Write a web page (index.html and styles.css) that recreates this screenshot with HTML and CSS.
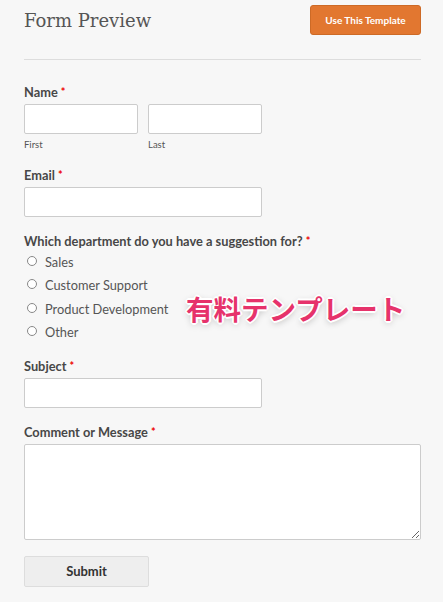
FILE: index.html
```html
<!DOCTYPE html>
<html lang="ja">
<head>
<meta charset="utf-8">
<title>Form Preview</title>
<link rel="stylesheet" href="styles.css">
</head>
<body>
<div class="page">
  <header class="header">
    <h1 class="title">Form Preview</h1>
    <button class="use-btn" type="button">Use This Template</button>
  </header>
  <hr class="divider">
  <form class="form">
    <div class="field">
      <div class="label">Name <span class="req">*</span></div>
      <div class="name-row">
        <div class="name-col">
          <input class="input input-half" type="text">
          <div class="sublabel">First</div>
        </div>
        <div class="name-col">
          <input class="input input-half" type="text">
          <div class="sublabel">Last</div>
        </div>
      </div>
    </div>
    <div class="field">
      <div class="label">Email <span class="req">*</span></div>
      <input class="input input-medium" type="email">
    </div>
    <div class="field field-radios">
      <div class="label">Which department do you have a suggestion for? <span class="req">*</span></div>
      <ul class="radios">
        <li class="radio-row"><input class="radio" type="radio" name="dept"><span>Sales</span></li>
        <li class="radio-row"><input class="radio" type="radio" name="dept"><span>Customer Support</span></li>
        <li class="radio-row"><input class="radio" type="radio" name="dept"><span>Product Development</span></li>
        <li class="radio-row"><input class="radio" type="radio" name="dept"><span>Other</span></li>
      </ul>
    </div>
    <div class="field">
      <div class="label">Subject <span class="req">*</span></div>
      <input class="input input-medium" type="text">
    </div>
    <div class="field">
      <div class="label">Comment or Message <span class="req">*</span></div>
      <textarea class="textarea"></textarea>
    </div>
    <button class="submit" type="button">Submit</button>
  </form>
  <div class="overlay">有料テンプレート</div>
</div>
</body>
</html>
```

FILE: styles.css
```css
html, body {
  margin: 0;
  padding: 0;
  background: #f7f7f7;
}
body {
  font-family: Lato, "Liberation Sans", sans-serif;
  color: #444;
}
.page {
  position: relative;
  width: 397px;
  padding: 5px 22px 0 24px;
}
.header {
  display: flex;
  justify-content: space-between;
  align-items: center;
  height: 30px;
}
.title {
  margin: 0;
  font-family: "DejaVu Serif", "Liberation Serif", serif;
  font-weight: normal;
  font-size: 18px;
  line-height: 30px;
  color: #555;
  padding-top: 1px;
}
.use-btn {
  height: 30px;
  width: 111px;
  padding: 0;
  background: #e27730;
  border: 1px solid #cd6a26;
  border-radius: 3px;
  color: #fff;
  font-family: Lato, "Liberation Sans", sans-serif;
  font-weight: 700;
  font-size: 10px;
}
.divider {
  margin: 24px 0 0;
  border: 0;
  border-top: 1px solid #ddd;
  height: 0;
}
.form {
  padding-top: 24px;
}
.field {
  margin-bottom: 16px;
}
.field-radios {
  margin-bottom: 14px;
}
.label {
  font-size: 12.8px;
  line-height: 16px;
  font-weight: 700;
  color: #474747;
  margin-bottom: 4px;
}
.req {
  color: #e00;
  font-size: 11px;
  vertical-align: 1px;
}
.name-row {
  display: flex;
  gap: 10px;
}
.name-col {
  display: flex;
  flex-direction: column;
}
.input {
  box-sizing: border-box;
  height: 30px;
  margin: 0;
  background: #fff;
  border: 1px solid #ccc;
  border-radius: 2px;
  display: block;
}
.input-half {
  width: 114px;
}
.input-medium {
  width: 238px;
}
.sublabel {
  font-size: 9.5px;
  line-height: 12px;
  margin-top: 5px;
  color: #555;
}
.radios {
  list-style: none;
  margin: -3px 0 0;
  padding: 0;
}
.radio-row {
  display: flex;
  align-items: center;
  height: 23.5px;
  font-size: 12.8px;
  color: #555;
}
.radio {
  appearance: none;
  -webkit-appearance: none;
  box-sizing: border-box;
  width: 10px;
  height: 10px;
  margin: 0 8px 2px 3px;
  border: 1px solid #888;
  border-radius: 50%;
  background: #fff;
}
.textarea {
  box-sizing: border-box;
  display: block;
  width: 397px;
  height: 96px;
  margin: 0;
  background: #fff;
  border: 1px solid #ccc;
  border-radius: 2px;
}
.submit {
  box-sizing: border-box;
  width: 125px;
  height: 31px;
  background: #eee;
  border: 1px solid #ddd;
  border-radius: 2px;
  font-family: Lato, "Liberation Sans", sans-serif;
  font-weight: 700;
  font-size: 13px;
  color: #333;
  padding-bottom: 2px;
}
.overlay {
  position: absolute;
  left: 186px;
  top: 290px;
  font-family: "Noto Sans CJK JP", sans-serif;
  font-weight: 700;
  font-size: 27.5px;
  line-height: 36px;
  color: #e6336b;
  text-shadow:
    1px 1px 0 #fff, -1px -1px 0 #fff, 1px -1px 0 #fff, -1px 1px 0 #fff,
    2px 0 0 #fff, -2px 0 0 #fff, 0 2px 0 #fff, 0 -2px 0 #fff,
    0 2px 7px rgba(0,0,0,0.3);
}
```
